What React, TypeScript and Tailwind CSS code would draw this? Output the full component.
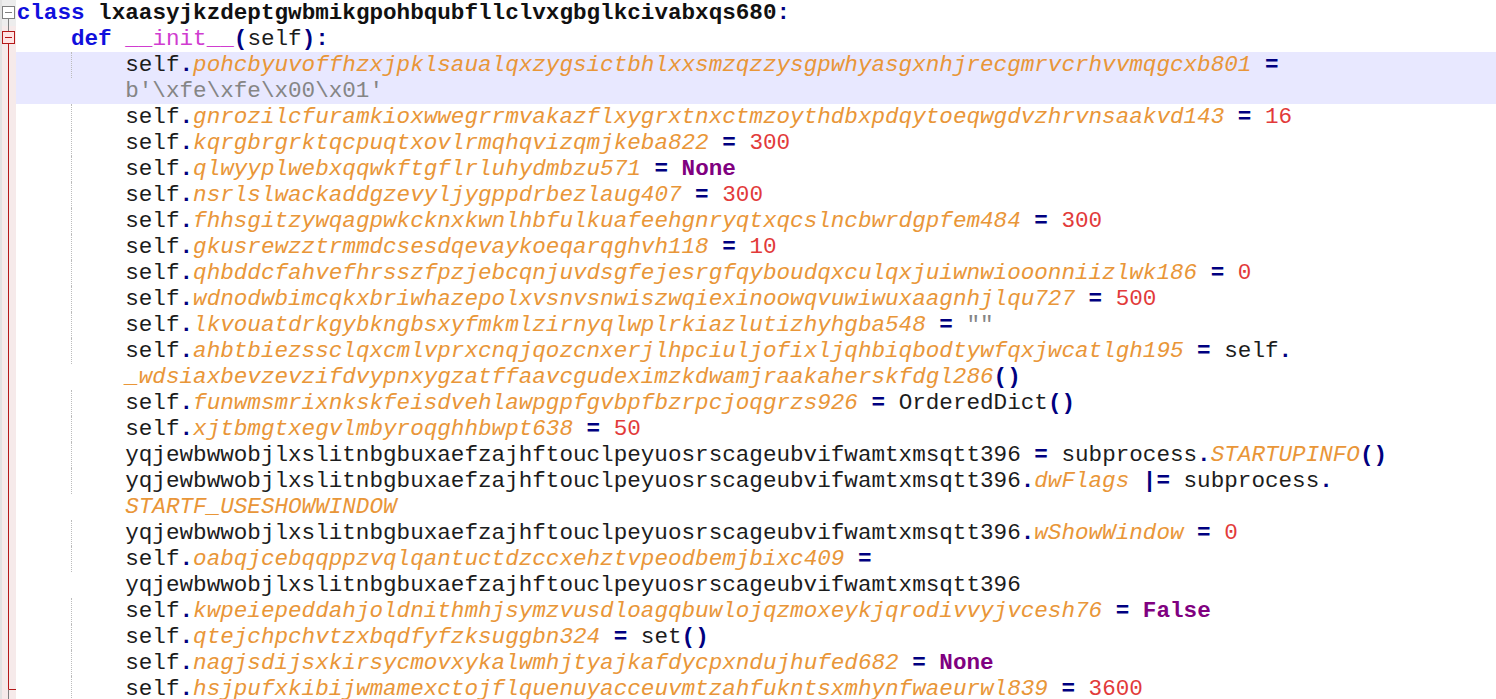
import React from "react";

type Kind = "kw" | "cls" | "def" | "op" | "id" | "attr" | "num" | "str" | "con";
type Tok = [string, Kind];

const K: Record<Kind, string> = {
  kw: "font-bold text-[#1010dd]",
  cls: "font-bold text-[#111111]",
  def: "text-[#d03cd0]",
  op: "font-bold text-[#000080]",
  id: "text-[#1c1c1c]",
  attr: "italic text-[#e99638]",
  num: "text-[#e23a3a]",
  str: "text-[#858585]",
  con: "font-bold text-[#800080]",
};

type Line = { indent: number; toks: Tok[]; guide: boolean; hl?: boolean };

const Y = "yqjewbwwobjlxslitnbgbuxaefzajhftouclpeyuosrscageubvifwamtxmsqtt396";

const sa = (attr: string, rhs: Tok[]): Line => ({
  indent: 8,
  guide: true,
  toks: [["self", "id"], [".", "op"], [attr, "attr"], [" ", "id"], ["=", "op"], [" ", "id"], ...rhs],
});

const lines: Line[] = [
  {
    indent: 0,
    guide: false,
    toks: [["class", "kw"], [" ", "id"], ["lxaasyjkzdeptgwbmikgpohbqubfllclvxgbglkcivabxqs680", "cls"], [":", "op"]],
  },
  {
    indent: 4,
    guide: false,
    toks: [["def", "kw"], [" ", "id"], ["__init__", "def"], ["(", "op"], ["self", "id"], [")", "op"], [":", "op"]],
  },
  {
    indent: 8,
    guide: true,
    hl: true,
    toks: [["self", "id"], [".", "op"], ["pohcbyuvoffhzxjpklsaualqxzygsictbhlxxsmzqzzysgpwhyasgxnhjrecgmrvcrhvvmqgcxb801", "attr"], [" ", "id"], ["=", "op"]],
  },
  { indent: 8, guide: false, hl: true, toks: [["b'\\xfe\\xfe\\x00\\x01'", "str"]] },
  sa("gnrozilcfuramkioxwwegrrmvakazflxygrxtnxctmzoythdbxpdqytoeqwgdvzhrvnsaakvd143", [["16", "num"]]),
  sa("kqrgbrgrktqcpuqtxovlrmqhqvizqmjkeba822", [["300", "num"]]),
  sa("qlwyyplwebxqqwkftgflrluhydmbzu571", [["None", "con"]]),
  sa("nsrlslwackaddgzevyljygppdrbezlaug407", [["300", "num"]]),
  sa("fhhsgitzywqagpwkcknxkwnlhbfulkuafeehgnryqtxqcslncbwrdgpfem484", [["300", "num"]]),
  sa("gkusrewzztrmmdcsesdqevaykoeqarqghvh118", [["10", "num"]]),
  sa("qhbddcfahvefhrsszfpzjebcqnjuvdsgfejesrgfqyboudqxculqxjuiwnwiooonniizlwk186", [["0", "num"]]),
  sa("wdnodwbimcqkxbriwhazepolxvsnvsnwiszwqiexinoowqvuwiwuxaagnhjlqu727", [["500", "num"]]),
  sa("lkvouatdrkgybkngbsxyfmkmlzirnyqlwplrkiazlutizhyhgba548", [['""', "str"]]),
  sa("ahbtbiezssclqxcmlvprxcnqjqozcnxerjlhpciuljofixljqhbiqbodtywfqxjwcatlgh195", [["self", "id"], [".", "op"]]),
  { indent: 8, guide: false, toks: [["_wdsiaxbevzevzifdvypnxygzatffaavcgudeximzkdwamjraakaherskfdgl286", "attr"], ["()", "op"]] },
  sa("funwmsmrixnkskfeisdvehlawpgpfgvbpfbzrpcjoqgrzs926", [["OrderedDict", "id"], ["()", "op"]]),
  sa("xjtbmgtxegvlmbyroqghhbwpt638", [["50", "num"]]),
  {
    indent: 8,
    guide: true,
    toks: [[Y, "id"], [" ", "id"], ["=", "op"], [" subprocess", "id"], [".", "op"], ["STARTUPINFO", "attr"], ["()", "op"]],
  },
  {
    indent: 8,
    guide: true,
    toks: [[Y, "id"], [".", "op"], ["dwFlags", "attr"], [" ", "id"], ["|=", "op"], [" subprocess", "id"], [".", "op"]],
  },
  { indent: 8, guide: false, toks: [["STARTF_USESHOWWINDOW", "attr"]] },
  {
    indent: 8,
    guide: true,
    toks: [[Y, "id"], [".", "op"], ["wShowWindow", "attr"], [" ", "id"], ["=", "op"], [" ", "id"], ["0", "num"]],
  },
  {
    indent: 8,
    guide: true,
    toks: [["self", "id"], [".", "op"], ["oabqjcebqqppzvqlqantuctdzccxehztvpeodbemjbixc409", "attr"], [" ", "id"], ["=", "op"]],
  },
  { indent: 8, guide: false, toks: [[Y, "id"]] },
  sa("kwpeiepeddahjoldnithmhjsymzvusdloagqbuwlojqzmoxeykjqrodivvyjvcesh76", [["False", "con"]]),
  sa("qtejchpchvtzxbqdfyfzksuggbn324", [["set", "id"], ["()", "op"]]),
  sa("nagjsdijsxkirsycmovxykalwmhjtyajkafdycpxndujhufed682", [["None", "con"]]),
  sa("hsjpufxkibijwmamexctojflquenuyacceuvmtzahfukntsxmhynfwaeurwl839", [["3600", "num"]]),
];

const GRAY = "#808080";
const RED = "#b41818";

function Marker({ i, last }: { i: number; last: number }) {
  const pinkBg = i >= 1;
  return (
    <div className={`w-[16px] shrink-0 ${pinkBg ? "bg-[#f6eaea]" : "bg-[#ededed]"}`}>
      <svg width="16" height="26" viewBox="0 0 16 26" className="block">
        <rect x="0" y="0" width="2" height="26" fill="#e2e2e2" />
        {i === 0 && (
          <>
            <rect x="2.5" y="6.5" width="12" height="12" fill="#ffffff" stroke={GRAY} />
            <line x1="5" y1="12.5" x2="12" y2="12.5" stroke={GRAY} />
            <line x1="8.5" y1="18.5" x2="8.5" y2="26" stroke={GRAY} />
          </>
        )}
        {i === 1 && (
          <>
            <line x1="8.5" y1="0" x2="8.5" y2="5.5" stroke={GRAY} />
            <rect x="2.5" y="5.5" width="12" height="12" fill="#ffe4e4" stroke={RED} />
            <line x1="5" y1="11.5" x2="12" y2="11.5" stroke={RED} />
            <line x1="8.5" y1="17.5" x2="8.5" y2="26" stroke={RED} />
          </>
        )}
        {i > 1 && i < last && <line x1="8.5" y1="0" x2="8.5" y2="26" stroke={RED} />}
        {i === last && (
          <>
            <line x1="8.5" y1="0" x2="8.5" y2="13.5" stroke={RED} />
            <line x1="8.5" y1="13.5" x2="16" y2="13.5" stroke={RED} />
            <line x1="8.5" y1="14" x2="8.5" y2="26" stroke={GRAY} />
          </>
        )}
      </svg>
    </div>
  );
}

export default function App() {
  const last = lines.length - 1;
  return (
    <div className="w-[1496px] h-[699px] overflow-hidden bg-white font-['Liberation_Mono','Courier_New',monospace] text-[22.62px]">
      {lines.map((ln, i) => (
        <div key={i} className="flex h-[26px]">
          <Marker i={i} last={last} />
          <div className={`flex flex-1 items-stretch pl-[0.7px] ${ln.hl ? "bg-[#e8e8ff]" : ""}`}>
            {ln.indent >= 4 && <span className="w-[4ch] shrink-0" />}
            {ln.indent >= 8 &&
              (ln.guide ? (
                <span className="w-[4ch] shrink-0 border-l border-dotted border-[#bcbcbc]" />
              ) : (
                <span className="w-[4ch] shrink-0" />
              ))}
            <span className="whitespace-pre leading-[26px]">
              {ln.toks.map(([t, k], j) => (
                <span key={j} className={K[k]}>
                  {t}
                </span>
              ))}
            </span>
          </div>
        </div>
      ))}
    </div>
  );
}
